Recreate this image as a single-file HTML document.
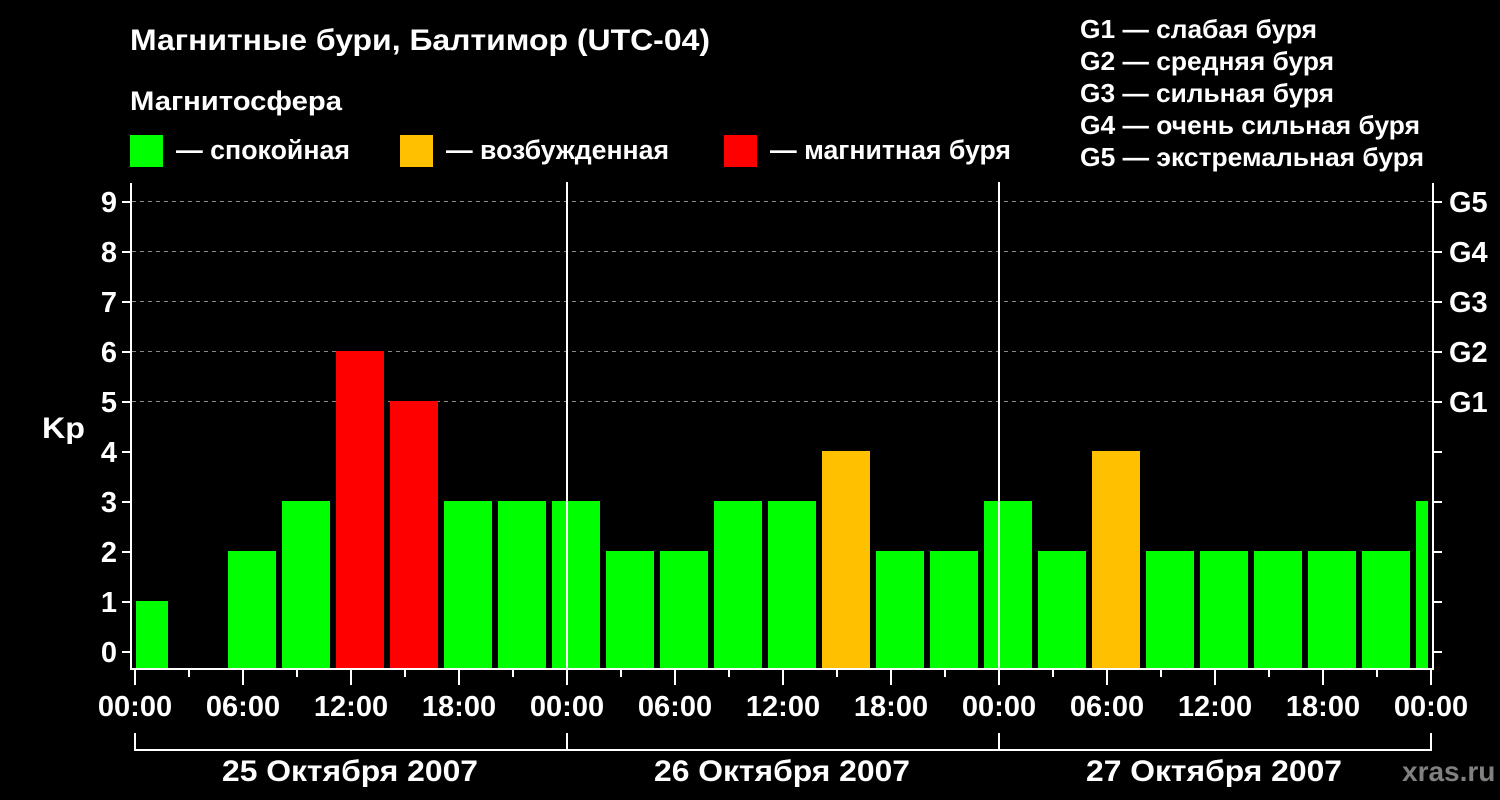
<!DOCTYPE html>
<html><head><meta charset="utf-8"><style>html,body{margin:0;padding:0;background:#000;width:1500px;height:800px;overflow:hidden}svg{display:block}text{font-family:"Liberation Sans",sans-serif;font-weight:bold;fill:#fff}</style></head><body>
<svg width="1500" height="800" viewBox="0 0 1500 800" xmlns="http://www.w3.org/2000/svg">
<text x="130" y="50" font-size="30" textLength="580" lengthAdjust="spacingAndGlyphs">Магнитные бури, Балтимор (UTC-04)</text>
<text x="130" y="110" font-size="27" textLength="212" lengthAdjust="spacingAndGlyphs">Магнитосфера</text>
<rect x="130" y="135" width="33" height="32" fill="#00ff00"/>
<text x="176" y="159" font-size="27" textLength="174" lengthAdjust="spacingAndGlyphs">— спокойная</text>
<rect x="400" y="135" width="33" height="32" fill="#ffc000"/>
<text x="446" y="159" font-size="27" textLength="223" lengthAdjust="spacingAndGlyphs">— возбужденная</text>
<rect x="724" y="135" width="33" height="32" fill="#ff0000"/>
<text x="770" y="159" font-size="27" textLength="241" lengthAdjust="spacingAndGlyphs">— магнитная буря</text>
<g font-size="26">
<text x="1080" y="38" textLength="237" lengthAdjust="spacingAndGlyphs">G1 — слабая буря</text>
<text x="1080" y="70" textLength="254" lengthAdjust="spacingAndGlyphs">G2 — средняя буря</text>
<text x="1080" y="102" textLength="254" lengthAdjust="spacingAndGlyphs">G3 — сильная буря</text>
<text x="1080" y="134" textLength="340" lengthAdjust="spacingAndGlyphs">G4 — очень сильная буря</text>
<text x="1080" y="166" textLength="344" lengthAdjust="spacingAndGlyphs">G5 — экстремальная буря</text>
</g>
<g stroke="#888" stroke-dasharray="4,4" stroke-width="1">
<line x1="132" y1="201.5" x2="1433" y2="201.5"/><line x1="132" y1="251.5" x2="1433" y2="251.5"/><line x1="132" y1="301.5" x2="1433" y2="301.5"/><line x1="132" y1="351.5" x2="1433" y2="351.5"/><line x1="132" y1="401.5" x2="1433" y2="401.5"/>
</g>
<g>
<rect x="136" y="601" width="32" height="67" fill="#00ff00"/>
<rect x="228" y="551" width="48" height="117" fill="#00ff00"/>
<rect x="282" y="501" width="48" height="167" fill="#00ff00"/>
<rect x="336" y="351" width="48" height="317" fill="#ff0000"/>
<rect x="390" y="401" width="48" height="267" fill="#ff0000"/>
<rect x="444" y="501" width="48" height="167" fill="#00ff00"/>
<rect x="498" y="501" width="48" height="167" fill="#00ff00"/>
<rect x="552" y="501" width="48" height="167" fill="#00ff00"/>
<rect x="606" y="551" width="48" height="117" fill="#00ff00"/>
<rect x="660" y="551" width="48" height="117" fill="#00ff00"/>
<rect x="714" y="501" width="48" height="167" fill="#00ff00"/>
<rect x="768" y="501" width="48" height="167" fill="#00ff00"/>
<rect x="822" y="451" width="48" height="217" fill="#ffc000"/>
<rect x="876" y="551" width="48" height="117" fill="#00ff00"/>
<rect x="930" y="551" width="48" height="117" fill="#00ff00"/>
<rect x="984" y="501" width="48" height="167" fill="#00ff00"/>
<rect x="1038" y="551" width="48" height="117" fill="#00ff00"/>
<rect x="1092" y="451" width="48" height="217" fill="#ffc000"/>
<rect x="1146" y="551" width="48" height="117" fill="#00ff00"/>
<rect x="1200" y="551" width="48" height="117" fill="#00ff00"/>
<rect x="1254" y="551" width="48" height="117" fill="#00ff00"/>
<rect x="1308" y="551" width="48" height="117" fill="#00ff00"/>
<rect x="1362" y="551" width="48" height="117" fill="#00ff00"/>
<rect x="1416" y="501" width="12" height="167" fill="#00ff00"/>
</g>
<g stroke="#fff" stroke-width="2" fill="none">
<line x1="567" y1="182" x2="567" y2="668"/><line x1="999" y1="182" x2="999" y2="668"/>
<polyline points="131,183 131,669 1433,669 1433,183"/>
<path d="M122 652H131M122 602H131M122 552H131M122 502H131M122 452H131M122 402H131M122 352H131M122 302H131M122 252H131M122 202H131"/>
<path d="M1433 652H1442M1433 602H1442M1433 552H1442M1433 502H1442M1433 452H1442M1433 402H1442M1433 352H1442M1433 302H1442M1433 252H1442M1433 202H1442"/>
<path d="M135 669V685M243 669V685M351 669V685M459 669V685M567 669V685M675 669V685M783 669V685M891 669V685M999 669V685M1107 669V685M1215 669V685M1323 669V685M1431 669V685"/>
<path d="M189 669V677M297 669V677M405 669V677M513 669V677M621 669V677M729 669V677M837 669V677M945 669V677M1053 669V677M1161 669V677M1269 669V677M1377 669V677"/>
<path d="M135 733V750H1431V733M567 733V750M999 733V750"/>
</g>
<g font-size="29" text-anchor="end">
<text x="117" y="662">0</text><text x="117" y="612">1</text><text x="117" y="562">2</text><text x="117" y="512">3</text><text x="117" y="462">4</text><text x="117" y="412">5</text><text x="117" y="362">6</text><text x="117" y="312">7</text><text x="117" y="262">8</text><text x="117" y="212">9</text>
</g>
<text x="42" y="438" font-size="30" textLength="43" lengthAdjust="spacingAndGlyphs">Kp</text>
<g font-size="29">
<text x="1449" y="212">G5</text><text x="1449" y="262">G4</text><text x="1449" y="312">G3</text><text x="1449" y="362">G2</text><text x="1449" y="412">G1</text>
</g>
<g font-size="29" text-anchor="middle">
<text x="135" y="716">00:00</text><text x="243" y="716">06:00</text><text x="351" y="716">12:00</text><text x="459" y="716">18:00</text>
<text x="567" y="716">00:00</text><text x="675" y="716">06:00</text><text x="783" y="716">12:00</text><text x="891" y="716">18:00</text>
<text x="999" y="716">00:00</text><text x="1107" y="716">06:00</text><text x="1215" y="716">12:00</text><text x="1323" y="716">18:00</text>
<text x="1431" y="716">00:00</text>
</g>
<g font-size="30">
<text x="222" y="781" textLength="256" lengthAdjust="spacingAndGlyphs">25 Октября 2007</text>
<text x="654" y="781" textLength="256" lengthAdjust="spacingAndGlyphs">26 Октября 2007</text>
<text x="1086" y="781" textLength="256" lengthAdjust="spacingAndGlyphs">27 Октября 2007</text>
</g>
<text x="1402" y="781" font-size="28" style="fill:#808080">xras.ru</text>
</svg>
</body></html>
